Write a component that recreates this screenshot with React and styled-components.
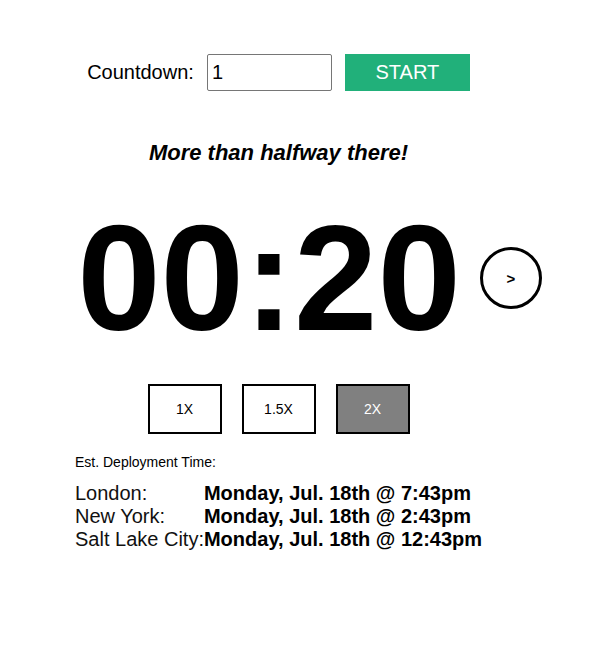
import React from "react";
import styled, { createGlobalStyle } from "styled-components";

const Global = createGlobalStyle`
  html, body { background: #fff; }
  body {
    margin: 8px;
    font-family: "Liberation Sans", Arial, sans-serif;
    color: #000;
  }
`;

const Page = styled.div`
  width: 541px;
  display: flex;
  flex-direction: column;
  align-items: center;
  padding-top: 46px;
`;

const TopRow = styled.div`
  display: flex;
  align-items: center;
  gap: 13px;
  height: 37px;
`;

const Label = styled.label`
  font-size: 20px;
  line-height: 23px;
`;

const Input = styled.input`
  box-sizing: border-box;
  width: 125px;
  height: 37px;
  border: 1px solid #767676;
  border-radius: 2px;
  padding: 0 4px;
  font-family: "Liberation Sans", Arial, sans-serif;
  font-size: 20px;
  color: #000;
  outline: none;
`;

const StartButton = styled.button`
  box-sizing: border-box;
  width: 125px;
  height: 37px;
  border: none;
  background: #21b07a;
  color: #fff;
  font-family: "Liberation Sans", Arial, sans-serif;
  font-size: 20px;
  padding: 0;
  cursor: pointer;
`;

const Status = styled.div`
  margin-top: 49px;
  font-size: 22px;
  line-height: 25px;
  font-weight: bold;
  font-style: italic;
`;

const TimerRow = styled.div`
  margin-top: 38px;
  width: 100%;
  display: grid;
  grid-template-columns: 1fr auto 1fr;
  align-items: center;
`;

const Timer = styled.div`
  grid-column: 2;
  font-size: 150px;
  line-height: 150px;
  font-weight: bold;
  padding-right: 19px;
`;

const NextButton = styled.button`
  grid-column: 3;
  justify-self: start;
  box-sizing: border-box;
  width: 62px;
  height: 62px;
  border-radius: 50%;
  border: 3px solid #000;
  background: #fff;
  color: #000;
  font-family: "Liberation Sans", Arial, sans-serif;
  font-weight: bold;
  font-size: 15px;
  padding: 0;
  cursor: pointer;
`;

const SpeedRow = styled.div`
  margin-top: 31px;
  display: flex;
  gap: 20px;
`;

const SpeedButton = styled.button`
  box-sizing: border-box;
  width: 74px;
  height: 50px;
  border: 2px solid #000;
  background: ${(p) => (p.$active ? "#808080" : "#fff")};
  color: ${(p) => (p.$active ? "#fff" : "#000")};
  font-family: "Liberation Sans", Arial, sans-serif;
  font-size: 14px;
  padding: 0;
  cursor: pointer;
`;

const Info = styled.div`
  align-self: flex-start;
  margin-left: 67px;
  margin-top: 20px;
`;

const InfoTitle = styled.div`
  font-size: 14px;
  line-height: 16px;
`;

const Times = styled.div`
  margin-top: 12px;
  display: grid;
  grid-template-columns: auto auto;
  justify-content: start;
  font-size: 20px;
  line-height: 23px;
`;

const City = styled.div`
  color: #111;
`;

const When = styled.div`
  font-weight: bold;
`;

const rows = [
  ["London:", "Monday, Jul. 18th @ 7:43pm"],
  ["New York:", "Monday, Jul. 18th @ 2:43pm"],
  ["Salt Lake City:", "Monday, Jul. 18th @ 12:43pm"],
];

export default function App() {
  return (
    <>
      <Global />
      <Page>
        <TopRow>
          <Label htmlFor="cd">Countdown:</Label>
          <Input id="cd" defaultValue="1" />
          <StartButton>START</StartButton>
        </TopRow>
        <Status>More than halfway there!</Status>
        <TimerRow>
          <Timer>00:20</Timer>
          <NextButton>&gt;</NextButton>
        </TimerRow>
        <SpeedRow>
          <SpeedButton>1X</SpeedButton>
          <SpeedButton>1.5X</SpeedButton>
          <SpeedButton $active>2X</SpeedButton>
        </SpeedRow>
        <Info>
          <InfoTitle>Est. Deployment Time:</InfoTitle>
          <Times>
            {rows.map(([c, w]) => (
              <React.Fragment key={c}>
                <City>{c}</City>
                <When>{w}</When>
              </React.Fragment>
            ))}
          </Times>
        </Info>
      </Page>
    </>
  );
}
